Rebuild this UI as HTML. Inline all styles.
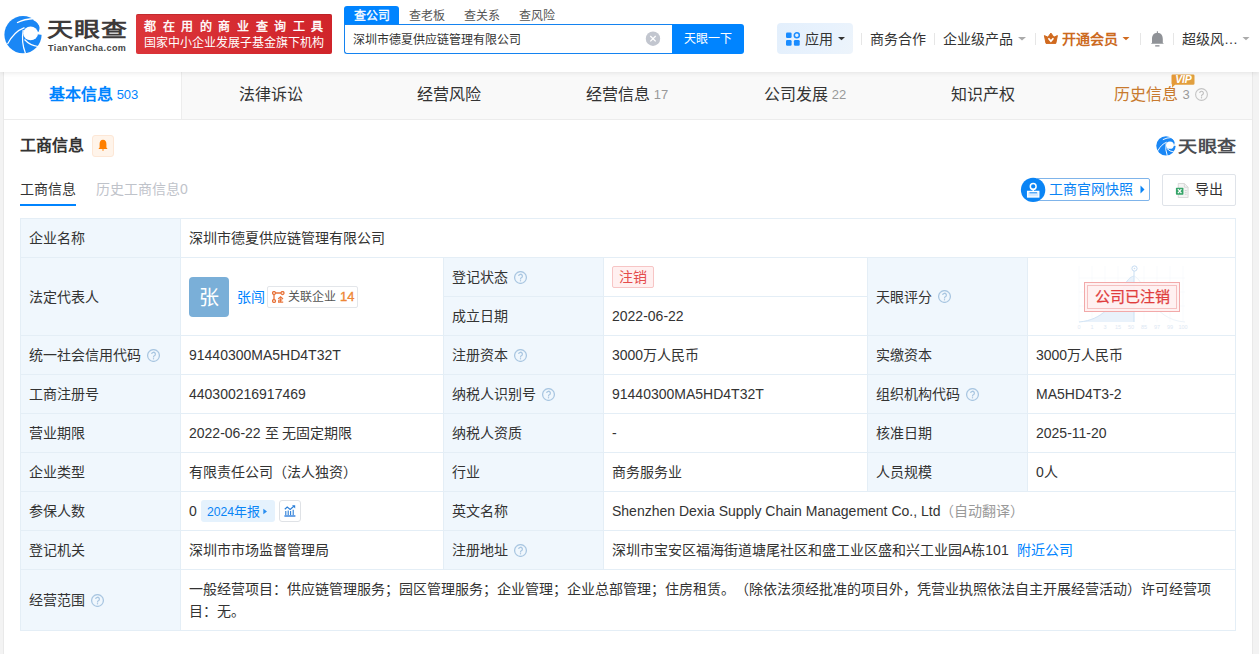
<!DOCTYPE html>
<html lang="zh-CN"><head><meta charset="utf-8">
<style>
*{box-sizing:border-box;margin:0;padding:0}
html,body{width:1259px;height:654px;overflow:hidden}
body{position:relative;text-spacing-trim:space-all;background:#f3f3f3;font-family:"Liberation Sans",sans-serif;font-size:14px;color:#333}
.a{position:absolute;white-space:nowrap}
#hdr{position:absolute;left:0;top:0;width:1259px;height:72px;background:#fff;z-index:5;box-shadow:0 1px 5px rgba(0,0,0,.09)}
#card{position:absolute;left:4px;top:72px;width:1248px;height:600px;background:#fff}
#tabs{position:absolute;left:0;top:0;width:1248px;height:48px;background:#f9f9f9;border-bottom:1px solid #ececec}
.tab{position:absolute;top:0;height:47px;width:178px;text-align:center;line-height:45px;font-size:16px;color:#333}
.tab .n{font-size:13px;color:#999;margin-left:4px;position:relative;top:-1px}
.qg{display:inline-block;width:13px;height:13px;border:1px solid #c8c8c8;border-radius:50%;vertical-align:middle;position:relative;margin-left:5px;top:-1px}
.qg:after{content:"?";position:absolute;left:0;top:0;width:11px;height:11px;line-height:11px;text-align:center;font-size:9px;color:#bbb}
table{position:absolute;left:16px;top:146px;border-collapse:collapse;table-layout:fixed}
td{border:1px solid #e4eef6;height:39px;line-height:20px;padding:0 8px;font-size:14px;color:#333;white-space:nowrap;vertical-align:middle}
td.l{background:#f0f7fd}
.qi{display:inline-block;vertical-align:middle;margin-left:6px;position:relative;top:-1px}
.q{display:inline-block;width:13px;height:13px;border:1px solid #b3d3ee;border-radius:50%;vertical-align:middle;position:relative;margin-left:6px;top:-1px}
.q:after{content:"?";position:absolute;left:0;top:0;width:11px;height:11px;line-height:11px;text-align:center;font-size:9px;color:#a7c9e8}
</style></head><body>
<div id="hdr">
  <svg class="a" style="left:2px;top:12px" width="44" height="44" viewBox="0 0 44 44">
    <circle cx="21" cy="22.7" r="18.6" fill="#1a87f5"/>
    <ellipse cx="28.6" cy="21.4" rx="7.4" ry="6.9" fill="#fff"/>
    <path d="M28.6 21.4 L40.5 19 L41 23 Z" fill="#fff"/>
    <path d="M31.5 8.2 Q36.6 10.6 37.5 14.6 Q37.9 17.4 36.6 20 L41 20 L41 4 L31 4 Z" fill="#fff"/>
    <path d="M15 10.8 Q22 7 33 6.5" stroke="#fff" stroke-width="1.3" fill="none"/>
    <path d="M5.5 32 Q12 19.5 22.5 15.6" stroke="#fff" stroke-width="1.2" fill="none"/>
    <path d="M21.2 18 Q19 30 23.5 41.5" stroke="#fff" stroke-width="1.2" fill="none"/>
    <path d="M22.5 27.5 Q28 33.5 36 34.5" stroke="#fff" stroke-width="1.2" fill="none"/>
  </svg>
  <div class="a" style="left:47px;top:10px;font-size:26px;line-height:34px;font-weight:bold;color:#3d3a3a;letter-spacing:1px;transform:scaleY(.8);transform-origin:0 85%">天眼查</div>
  <div class="a" style="left:48px;top:42px;font-size:9px;line-height:12px;font-weight:bold;color:#444;letter-spacing:.42px">TianYanCha.com</div>
  <div class="a" style="left:136px;top:14px;width:196px;height:40px;background:linear-gradient(100deg,#dc353a,#d0242a);border-radius:2px;box-shadow:inset 0 1px 0 rgba(150,30,30,.35)"></div>
  <div class="a" style="left:144px;top:20px;font-size:12px;line-height:14px;color:#fff;letter-spacing:6.6px;-webkit-text-stroke:.4px #fff">都在用的商业查询工具</div>
  <div class="a" style="left:144px;top:36px;font-size:12px;line-height:14px;color:#fff">国家中小企业发展子基金旗下机构</div>

  <div class="a" style="left:344px;top:6px;width:55px;height:19px;background:#0084ff;border-radius:3px 3px 0 0"></div>
  <div class="a" style="left:344px;top:7px;width:55px;color:#fff;font-size:12px;line-height:18px;text-align:center;-webkit-text-stroke:.3px #fff">查公司</div>
  <div class="a" style="left:399px;top:7px;width:55px;color:#555;font-size:12px;line-height:18px;text-align:center">查老板</div>
  <div class="a" style="left:454px;top:7px;width:55px;color:#555;font-size:12px;line-height:18px;text-align:center">查关系</div>
  <div class="a" style="left:509px;top:7px;width:55px;color:#555;font-size:12px;line-height:18px;text-align:center">查风险</div>
  <div class="a" style="left:344px;top:24px;width:330px;height:30px;border:1px solid #1483f0;border-right:0;border-radius:0 0 0 3px;background:#fff"></div>
  <div class="a" style="left:353px;top:30px;font-size:12px;color:#333;line-height:20px">深圳市德夏供应链管理有限公司</div>
  <svg class="a" style="left:645px;top:31px" width="16" height="16" viewBox="0 0 16 16"><circle cx="8" cy="7.7" r="7.2" fill="#c2c6cf"/><path d="M5.3 5 L10.7 10.4 M10.7 5 L5.3 10.4" stroke="#fff" stroke-width="1.3"/></svg>
  <div class="a" style="left:672px;top:24px;width:72px;height:30px;background:#0084ff;border-radius:0 3px 3px 0;color:#fff;font-size:12px;line-height:31px;text-align:center">天眼一下</div>

  <div class="a" style="left:777px;top:23px;width:76px;height:31px;background:linear-gradient(120deg,#e3effc,#e8f2fd 60%,#edf4fb);border-radius:4px"></div>
  <svg class="a" style="left:785px;top:31px" width="16" height="16" viewBox="0 0 16 16">
    <rect x="1" y="1.4" width="5.6" height="5.6" rx="1.3" fill="#1a8cff"/>
    <circle cx="11.8" cy="4.2" r="2.5" fill="none" stroke="#1a8cff" stroke-width="1.5"/>
    <rect x="1" y="9" width="5.6" height="5.8" rx="1.3" fill="#1a8cff"/>
    <rect x="8.9" y="9" width="5.8" height="5.8" rx="1.3" fill="#1a8cff"/>
  </svg>
  <div class="a" style="left:805px;top:30px;font-size:14px;line-height:18px;color:#333">应用</div>
  <svg class="a" style="left:838px;top:36px" width="7" height="5" viewBox="0 0 7 5"><path d="M0 1 L7 1 L3.5 4.2 Z" fill="#333"/></svg>
  <div class="a" style="left:861px;top:33px;width:1px;height:12px;background:#e6e6e6"></div>
  <div class="a" style="left:870px;top:30px;font-size:14px;line-height:18px;color:#333">商务合作</div>
  <div class="a" style="left:934px;top:33px;width:1px;height:12px;background:#e6e6e6"></div>
  <div class="a" style="left:943px;top:30px;font-size:14px;line-height:18px;color:#333">企业级产品</div>
  <svg class="a" style="left:1018px;top:36px" width="8" height="5" viewBox="0 0 8 5"><path d="M0 1 L8 1 L4 4.4 Z" fill="#aaa"/></svg>
  <div class="a" style="left:1035px;top:33px;width:1px;height:12px;background:#e6e6e6"></div>
  <svg class="a" style="left:1043px;top:32px" width="16" height="13" viewBox="0 0 16 13">
    <path d="M1.4 3.6 L4.9 5.2 L7.9 1.1 L10.9 5.2 L14.4 3.6 L12.8 11.4 L3 11.4 Z" fill="#d06a1f" stroke="#d06a1f" stroke-width="1" stroke-linejoin="round"/>
    <path d="M5.4 6.3 L7.9 9.1 L10.4 6.3" stroke="#fff" stroke-width="1.7" fill="none"/>
  </svg>
  <div class="a" style="left:1062px;top:30px;font-size:14px;line-height:18px;color:#cc6a1e;font-weight:bold">开通会员</div>
  <svg class="a" style="left:1122px;top:36px" width="8" height="5" viewBox="0 0 8 5"><path d="M0.5 1 L7.5 1 L4 4.2 Z" fill="#d06a1f"/></svg>
  <div class="a" style="left:1140px;top:33px;width:1px;height:12px;background:#e6e6e6"></div>
  <svg class="a" style="left:1150px;top:30px" width="16" height="17" viewBox="0 0 16 17">
    <path d="M7.4 1.2 V3" stroke="#8f9297" stroke-width="1.1"/>
    <path d="M7.4 2.8 C11 2.9 12.8 5.4 12.8 9 V12.7 L13.9 13.7 H0.9 L2 12.7 V9 C2 5.4 3.8 2.9 7.4 2.8 Z" fill="#8f9297"/>
    <rect x="5.2" y="15.1" width="4.3" height="1.5" fill="#9a9ca1"/>
  </svg>
  <div class="a" style="left:1173px;top:33px;width:1px;height:12px;background:#e6e6e6"></div>
  <div class="a" style="left:1182px;top:30px;font-size:14px;line-height:18px;color:#333">超级风…</div>
  <svg class="a" style="left:1242px;top:36px" width="8" height="5" viewBox="0 0 8 5"><path d="M0.5 1 L7.5 1 L4 4.2 Z" fill="#aaa"/></svg>
</div>

<div class="a" style="left:3px;top:72px;width:1px;height:600px;background:#e9e9e9"></div>
<div class="a" style="left:1252px;top:72px;width:1px;height:600px;background:#e9e9e9"></div>
<div id="card">
  <div id="tabs">
    <div class="tab" style="left:0;width:178px;padding-left:2px;background:#fff;border-right:1px solid #ededed;color:#0084ff;font-weight:bold">基本信息<span class="n" style="color:#0084ff;font-weight:normal">503</span></div>
    <div class="tab" style="left:178px">法律诉讼</div>
    <div class="tab" style="left:356px">经营风险</div>
    <div class="tab" style="left:534px">经营信息<span class="n">17</span></div>
    <div class="tab" style="left:712px">公司发展<span class="n">22</span></div>
    <div class="tab" style="left:890px">知识产权</div>
    <div class="tab" style="left:1068px;color:#c87a2e">历史信息<span class="n">3</span><svg class="qi" style="margin-left:5px" width="13" height="13" viewBox="0 0 13 13"><circle cx="6.5" cy="6.5" r="5.9" fill="none" stroke="#c4c4c4" stroke-width="1.1"/><path d="M4.7 5.1 a1.85 1.85 0 1 1 2.6 1.7 c-0.55 0.3 -0.75 0.6 -0.75 1.3 v0.35" fill="none" stroke="#bdbdbd" stroke-width="1.1"/><circle cx="6.5" cy="9.7" r="0.7" fill="#bdbdbd"/></svg></div>
  </div>
  <svg class="a" style="left:1166px;top:2px" width="26" height="15" viewBox="0 0 26 15">
    <defs><linearGradient id="vg" x1="0" x2="1"><stop offset="0" stop-color="#e69a37"/><stop offset="1" stop-color="#e0a040"/></linearGradient></defs>
    <path d="M2.8 0.5 H23.2 Q24.5 0.5 24.5 1.8 V9.5 Q24.5 10.8 23.2 10.8 H5 L2 13.8 L2 10.6 Q1.5 10.2 1.5 9.5 V1.8 Q1.5 0.5 2.8 0.5 Z" fill="url(#vg)"/>
    <text x="13.3" y="9.3" text-anchor="middle" font-family="Liberation Sans" font-weight="bold" font-style="italic" font-size="10.5" fill="#fff" letter-spacing="-.2">VIP</text>
  </svg>
  <div class="a" style="left:16px;top:63px;font-size:16px;font-weight:bold;line-height:22px">工商信息</div>
  <div class="a" style="left:88px;top:63px;width:22px;height:22px;background:#fff4ea;border:1px solid #fde7d6;border-radius:3px"></div>
  <svg class="a" style="left:94px;top:67px" width="10" height="13" viewBox="0 0 10 13">
    <path d="M5 0.8 C7.3 0.8 8.4 2.6 8.4 5 L8.4 8.6 L9.6 10 L0.4 10 L1.6 8.6 L1.6 5 C1.6 2.6 2.7 0.8 5 0.8 Z" fill="#ff8000"/>
    <path d="M3.8 10.6 L6.2 10.6 L5 12 Z" fill="#ff8000"/>
  </svg>
  <div class="a" style="left:16px;top:107px;font-size:14px;line-height:20px">工商信息</div>
  <div class="a" style="left:16px;top:132px;width:56px;height:2px;background:#0084ff"></div>
  <div class="a" style="left:92px;top:107px;font-size:14px;line-height:20px;color:#bfc3ca">历史工商信息0</div>

  <svg class="a" style="left:1151px;top:62px" width="23" height="23" viewBox="0 0 44 44">
    <circle cx="21" cy="22.7" r="18.6" fill="#1a87f5"/>
    <ellipse cx="28.6" cy="21.4" rx="7.4" ry="6.9" fill="#fff"/>
    <path d="M28.6 21.4 L40.5 19 L41 23 Z" fill="#fff"/>
    <path d="M31.5 8.2 Q36.6 10.6 37.5 14.6 Q37.9 17.4 36.6 20 L41 20 L41 4 L31 4 Z" fill="#fff"/>
    <path d="M15 10.8 Q22 7 33 6.5" stroke="#fff" stroke-width="1.8" fill="none"/>
    <path d="M5.5 32 Q12 19.5 22.5 15.6" stroke="#fff" stroke-width="1.8" fill="none"/>
    <path d="M21.2 18 Q19 30 23.5 41.5" stroke="#fff" stroke-width="1.8" fill="none"/>
    <path d="M22.5 27.5 Q28 33.5 36 34.5" stroke="#fff" stroke-width="1.8" fill="none"/>
  </svg>
  <div class="a" style="left:1174px;top:63px;font-size:19px;line-height:24px;font-weight:bold;color:#4a4d52;letter-spacing:.7px;transform:scaleY(.82);transform-origin:0 50%">天眼查</div>

  <div class="a" style="left:1032px;top:106px;width:114px;height:23px;border:1px solid #7fb4ea;border-radius:2px"></div>
  <svg class="a" style="left:1016px;top:105px" width="26" height="26" viewBox="0 0 26 26">
    <circle cx="13.1" cy="12.9" r="12.2" fill="#0a84f5"/>
    <circle cx="13.2" cy="9.4" r="2.9" fill="#0a84f5" stroke="#fff" stroke-width="1.5"/>
    <path d="M13.2 12.3 V14.6" stroke="#fff" stroke-width="1.5"/>
    <rect x="7.6" y="14.4" width="11.2" height="5.6" fill="#d6eaff" stroke="#fff" stroke-width="1.3"/>
    <path d="M9.5 15.8 H17" stroke="#0a84f5" stroke-width="0.9"/>
  </svg>
  <div class="a" style="left:1045px;top:107px;font-size:14px;line-height:20px;color:#0a84f5">工商官网快照</div>
  <svg class="a" style="left:1136px;top:113px" width="5" height="9" viewBox="0 0 5 9"><path d="M0.5 0.5 L4.5 4.5 L0.5 8.5 Z" fill="#0a84f5"/></svg>

  <div class="a" style="left:1158px;top:102px;width:74px;height:32px;border:1px solid #dfe3e9;border-radius:2px;background:#fff"></div>
  <svg class="a" style="left:1171px;top:111px" width="14" height="15" viewBox="0 0 14 16">
    <path d="M3 0.5 H9.5 L13.5 4.5 V15.5 H3 Z" fill="#f4f4f4" stroke="#d6d6d6" stroke-width="1"/>
    <path d="M9.5 0.5 V4.5 H13.5" fill="none" stroke="#d6d6d6" stroke-width="1"/>
    <rect x="0.5" y="5" width="8" height="7.5" rx="0.8" fill="#35a468"/>
    <path d="M2.6 6.6 L6.4 10.9 M6.4 6.6 L2.6 10.9" stroke="#fff" stroke-width="1.3"/>
    <path d="M10 8 H12 M10 10 H12 M10 12 H12" stroke="#cfcfcf" stroke-width="0.9"/>
  </svg>
  <div class="a" style="left:1191px;top:107px;font-size:14px;line-height:20px;color:#333">导出</div>

  <table>
    <colgroup><col style="width:160px"><col style="width:263px"><col style="width:160px"><col style="width:264px"><col style="width:160px"><col style="width:208px"></colgroup>
    <tr><td class="l">企业名称</td><td colspan="5">深圳市德夏供应链管理有限公司</td></tr>
    <tr><td class="l" rowspan="2">法定代表人</td><td rowspan="2"></td><td class="l">登记状态<svg class="qi" width="13" height="13" viewBox="0 0 13 13"><circle cx="6.5" cy="6.5" r="5.9" fill="none" stroke="#a9c6e1" stroke-width="1.25"/><path d="M4.7 5.1 a1.85 1.85 0 1 1 2.6 1.7 c-0.55 0.3 -0.75 0.6 -0.75 1.3 v0.35" fill="none" stroke="#a9c6e1" stroke-width="1.25"/><circle cx="6.5" cy="9.7" r="0.7" fill="#abc7e0"/></svg></td><td></td><td class="l" rowspan="2">天眼评分<svg class="qi" width="13" height="13" viewBox="0 0 13 13"><circle cx="6.5" cy="6.5" r="5.9" fill="none" stroke="#a9c6e1" stroke-width="1.25"/><path d="M4.7 5.1 a1.85 1.85 0 1 1 2.6 1.7 c-0.55 0.3 -0.75 0.6 -0.75 1.3 v0.35" fill="none" stroke="#a9c6e1" stroke-width="1.25"/><circle cx="6.5" cy="9.7" r="0.7" fill="#abc7e0"/></svg></td><td rowspan="2"></td></tr>
    <tr><td class="l">成立日期</td><td>2022-06-22</td></tr>
    <tr><td class="l">统一社会信用代码<svg class="qi" width="13" height="13" viewBox="0 0 13 13"><circle cx="6.5" cy="6.5" r="5.9" fill="none" stroke="#a9c6e1" stroke-width="1.25"/><path d="M4.7 5.1 a1.85 1.85 0 1 1 2.6 1.7 c-0.55 0.3 -0.75 0.6 -0.75 1.3 v0.35" fill="none" stroke="#a9c6e1" stroke-width="1.25"/><circle cx="6.5" cy="9.7" r="0.7" fill="#abc7e0"/></svg></td><td>91440300MA5HD4T32T</td><td class="l">注册资本<svg class="qi" width="13" height="13" viewBox="0 0 13 13"><circle cx="6.5" cy="6.5" r="5.9" fill="none" stroke="#a9c6e1" stroke-width="1.25"/><path d="M4.7 5.1 a1.85 1.85 0 1 1 2.6 1.7 c-0.55 0.3 -0.75 0.6 -0.75 1.3 v0.35" fill="none" stroke="#a9c6e1" stroke-width="1.25"/><circle cx="6.5" cy="9.7" r="0.7" fill="#abc7e0"/></svg></td><td>3000万人民币</td><td class="l">实缴资本</td><td>3000万人民币</td></tr>
    <tr><td class="l">工商注册号</td><td>440300216917469</td><td class="l">纳税人识别号<svg class="qi" width="13" height="13" viewBox="0 0 13 13"><circle cx="6.5" cy="6.5" r="5.9" fill="none" stroke="#a9c6e1" stroke-width="1.25"/><path d="M4.7 5.1 a1.85 1.85 0 1 1 2.6 1.7 c-0.55 0.3 -0.75 0.6 -0.75 1.3 v0.35" fill="none" stroke="#a9c6e1" stroke-width="1.25"/><circle cx="6.5" cy="9.7" r="0.7" fill="#abc7e0"/></svg></td><td>91440300MA5HD4T32T</td><td class="l">组织机构代码<svg class="qi" width="13" height="13" viewBox="0 0 13 13"><circle cx="6.5" cy="6.5" r="5.9" fill="none" stroke="#a9c6e1" stroke-width="1.25"/><path d="M4.7 5.1 a1.85 1.85 0 1 1 2.6 1.7 c-0.55 0.3 -0.75 0.6 -0.75 1.3 v0.35" fill="none" stroke="#a9c6e1" stroke-width="1.25"/><circle cx="6.5" cy="9.7" r="0.7" fill="#abc7e0"/></svg></td><td>MA5HD4T3-2</td></tr>
    <tr><td class="l">营业期限</td><td>2022-06-22 至 无固定期限</td><td class="l">纳税人资质</td><td>-</td><td class="l">核准日期</td><td>2025-11-20</td></tr>
    <tr><td class="l">企业类型</td><td>有限责任公司（法人独资）</td><td class="l">行业</td><td>商务服务业</td><td class="l">人员规模</td><td>0人</td></tr>
    <tr><td class="l">参保人数</td><td>0</td><td class="l">英文名称</td><td colspan="3">Shenzhen Dexia Supply Chain Management Co., Ltd<span style="color:#999">（自动翻译）</span></td></tr>
    <tr><td class="l">登记机关</td><td>深圳市市场监督管理局</td><td class="l">注册地址<svg class="qi" width="13" height="13" viewBox="0 0 13 13"><circle cx="6.5" cy="6.5" r="5.9" fill="none" stroke="#a9c6e1" stroke-width="1.25"/><path d="M4.7 5.1 a1.85 1.85 0 1 1 2.6 1.7 c-0.55 0.3 -0.75 0.6 -0.75 1.3 v0.35" fill="none" stroke="#a9c6e1" stroke-width="1.25"/><circle cx="6.5" cy="9.7" r="0.7" fill="#abc7e0"/></svg></td><td colspan="3">深圳市宝安区福海街道塘尾社区和盛工业区盛和兴工业园A栋101<span style="color:#0084ff;margin-left:8px">附近公司</span></td></tr>
    <tr><td class="l" style="height:61px">经营范围<svg class="qi" width="13" height="13" viewBox="0 0 13 13"><circle cx="6.5" cy="6.5" r="5.9" fill="none" stroke="#a9c6e1" stroke-width="1.25"/><path d="M4.7 5.1 a1.85 1.85 0 1 1 2.6 1.7 c-0.55 0.3 -0.75 0.6 -0.75 1.3 v0.35" fill="none" stroke="#a9c6e1" stroke-width="1.25"/><circle cx="6.5" cy="9.7" r="0.7" fill="#abc7e0"/></svg></td><td colspan="5" style="line-height:22px">一般经营项目：供应链管理服务；园区管理服务；企业管理；企业总部管理；住房租赁。（除依法须经批准的项目外，凭营业执照依法自主开展经营活动）许可经营项<br>目：无。</td></tr>
  </table>
  <!-- legal rep -->
  <div class="a" style="left:185px;top:205px;width:40px;height:40px;background:#7aafd8;border-radius:4px;color:#fff;font-size:20px;line-height:42px;text-align:center">张</div>
  <div class="a" style="left:233px;top:215px;font-size:14px;line-height:20px;color:#0084ff">张闯</div>
  <div class="a" style="left:263px;top:214px;width:91px;height:22px;border:1px solid #e3e6ea;border-radius:2px;background:#fff"></div>
  <svg class="a" style="left:268px;top:219px" width="13" height="12" viewBox="0 0 13 12">
    <circle cx="2" cy="2" r="1.5" fill="none" stroke="#e8743b" stroke-width="1.3"/>
    <circle cx="10.5" cy="2" r="1.5" fill="none" stroke="#e8743b" stroke-width="1.3"/>
    <circle cx="2" cy="10" r="1.5" fill="none" stroke="#e8743b" stroke-width="1.3"/>
    <path d="M3.5 2 H9 M2 3.5 V8.5" stroke="#e8743b" stroke-width="1.3"/>
    <path d="M6.2 8 L8.6 5.8 L11 8 M8.6 7.2 V11 M7 9 H10.2 M6 11.2 H11.2 M6.8 9 V11.2" stroke="#e8743b" stroke-width="1.2" fill="none"/>
  </svg>
  <div class="a" style="left:284px;top:215px;font-size:12px;line-height:20px;color:#555">关联企业</div>
  <div class="a" style="left:336px;top:215px;font-size:13px;line-height:20px;color:#ee8636;-webkit-text-stroke:.35px #ee8636">14</div>
  <!-- status -->
  <div class="a" style="left:608px;top:194px;width:42px;height:22px;background:#fff0f0;border:1px solid #f7c5c5;border-radius:2px;color:#e44b4b;font-size:14px;line-height:20px;text-align:center">注销</div>
  <!-- score -->
  <svg class="a" style="left:1069px;top:192px" width="120" height="66" viewBox="0 0 120 66">
    <g stroke="#f5f8fb" stroke-width="0.6">
      <path d="M6 2 V58 M19 2 V58 M32 2 V58 M45 2 V58 M58 2 V58 M71 2 V58 M84 2 V58 M97 2 V58 M110 2 V58"/>
      <path d="M6 14 H112 M6 28 H112 M6 42 H112"/>
    </g>
    <path d="M6 58 C30 56 40 40 50 24 C54 16 57 13 61 12 L61 58 Z" fill="#e9f2fb"/>
    <path d="M6 58 C30 56 40 40 50 24 C54 16 57 13 61 12" fill="none" stroke="#d2e4f5" stroke-width="1"/>
    <path d="M61 12 C66 14 70 22 76 34 C84 48 96 57 112 58" fill="none" stroke="#eef4fa" stroke-width="1"/>
    <path d="M61 6 V58" stroke="#d2e4f5" stroke-width="1.2"/>
    <circle cx="61.5" cy="4.5" r="2.6" fill="#fff" stroke="#c6dcf2" stroke-width="1"/>
    <circle cx="61.5" cy="4.5" r="0.8" fill="#c6dcf2"/>
    <g font-family="Liberation Sans" font-size="5.5" fill="#dde8f3" text-anchor="middle">
      <text x="6" y="65">0</text><text x="19" y="65">1</text><text x="32" y="65">3</text><text x="45" y="65">15</text><text x="58" y="65">50</text><text x="71" y="65">85</text><text x="84" y="65">97</text><text x="97" y="65">99</text><text x="110" y="65">100</text>
    </g>
  </svg>
  <div class="a" style="left:1080px;top:210px;width:96px;height:30px;border:1px solid #f2a9a9;background:rgba(255,240,240,.92)"></div>
  <div class="a" style="left:1083px;top:213px;width:90px;height:24px;border:1px solid #f5c0c0"></div>
  <div class="a" style="left:1080px;top:214px;width:96px;text-align:center;font-size:15px;line-height:22px;color:#e03c3c;-webkit-text-stroke:.25px #e03c3c">公司已注销</div>
  <!-- insured -->
  <div class="a" style="left:197px;top:428px;width:74px;height:22px;background:#e5f2fd;border-radius:3px"></div>
  <div class="a" style="left:203px;top:430px;font-size:13px;line-height:20px;color:#0a84f5"><span style="font-size:12.2px">2024</span>年报</div>
  <svg class="a" style="left:259px;top:436px" width="5" height="7" viewBox="0 0 5 7"><path d="M0.3 0.8 L4 3.5 L0.3 6.2 Z" fill="#2a8ef0"/></svg>
  <div class="a" style="left:275px;top:428px;width:22px;height:22px;border:1px solid #dfe2e6;border-radius:3px;background:#fff"></div>
  <svg class="a" style="left:280px;top:433px" width="12" height="12" viewBox="0 0 12 12">
    <path d="M0.8 4.2 L3.2 2 L6.2 4.4 L9.8 1.2" fill="none" stroke="#2b7fd8" stroke-width="1.2"/>
    <path d="M8 0.2 H11.2 V3.4 Z" fill="#2b7fd8"/>
    <path d="M1.8 6 V10.2 M4.2 5.4 V10.2 M6.6 6 V10.2 M9.2 4.8 V10.2" stroke="#2b7fd8" stroke-width="1.1"/>
    <rect x="0.4" y="10.2" width="11" height="1.6" fill="#4a8ee0"/>
  </svg>
</div>
</body></html>
